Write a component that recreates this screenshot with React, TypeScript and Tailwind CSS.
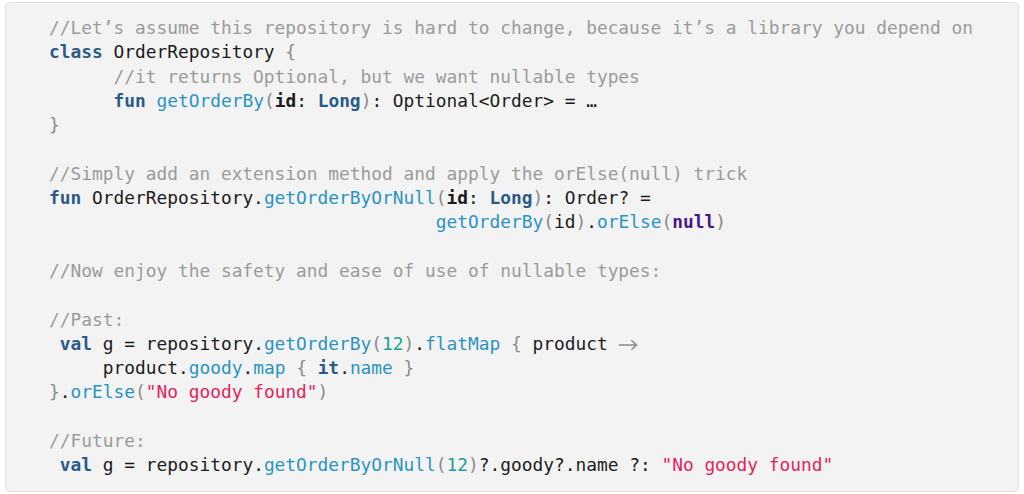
type Tok = [string, string];

const c = "text-[#9b9b9b]"; // comment
const k = "text-[#2c5a86] font-bold"; // keyword
const f = "text-[#2a93c2]"; // function / property
const p = "text-[#8a8a8a]"; // brackets
const t = "text-[#1c1c1c]"; // plain
const b = "text-[#1c1c1c] font-bold"; // param
const n = "text-[#1f9c9c]"; // number
const s = "text-[#e3245a]"; // string
const nl = "text-[#46178a] font-bold"; // null

const lines: Tok[][] = [
  [[c, "//Let\u2019s assume this repository is hard to change, because it\u2019s a library you depend on"]],
  [[k, "class"], [t, " OrderRepository "], [p, "{"]],
  [[c, "      //it returns Optional, but we want nullable types"]],
  [[t, "      "], [k, "fun"], [t, " "], [f, "getOrderBy"], [p, "("], [b, "id"], [t, ": "], [k, "Long"], [p, ")"], [t, ": Optional<Order> = \u2026"]],
  [[p, "}"]],
  [],
  [[c, "//Simply add an extension method and apply the orElse(null) trick"]],
  [[k, "fun"], [t, " OrderRepository."], [f, "getOrderByOrNull"], [p, "("], [b, "id"], [t, ": "], [k, "Long"], [p, ")"], [t, ": Order? ="]],
  [[t, "                                    "], [f, "getOrderBy"], [p, "("], [t, "id"], [p, ")"], [t, "."], [f, "orElse"], [p, "("], [nl, "null"], [p, ")"]],
  [],
  [[c, "//Now enjoy the safety and ease of use of nullable types:"]],
  [],
  [[c, "//Past:"]],
  [[t, " "], [k, "val"], [t, " g = repository."], [f, "getOrderBy"], [p, "("], [n, "12"], [p, ")"], [t, "."], [f, "flatMap"], [t, " "], [p, "{"], [t, " product "], ["arrow", "->"]],
  [[t, "     product."], [f, "goody"], [t, "."], [f, "map"], [t, " "], [p, "{"], [t, " "], [k, "it"], [t, "."], [f, "name"], [t, " "], [p, "}"]],
  [[p, "}"], [t, "."], [f, "orElse"], [p, "("], [s, "\"No goody found\""], [p, ")"]],
  [],
  [[c, "//Future:"]],
  [[t, " "], [k, "val"], [t, " g = repository."], [f, "getOrderByOrNull"], [p, "("], [n, "12"], [p, ")"], [t, "?.goody?.name ?: "], [s, "\"No goody found\""]],
];

function Arrow() {
  return (
    <span className="inline-block w-[2ch] align-middle text-[#8a8a8a]">
      <svg viewBox="0 0 22 12" className="h-[12px] w-[21px]" fill="none" stroke="currentColor" strokeWidth="1.6" strokeLinecap="round" strokeLinejoin="round">
        <path d="M1.5 6h18M14.5 1.5 19.5 6l-5 4.5" />
      </svg>
    </span>
  );
}

export default function App() {
  return (
    <div className="min-h-[494px] bg-white pl-[5px] pr-[5px] pt-[2px]">
      <div className="rounded-[5px] border border-[#dedede] bg-[#f3f3f3] pb-[13px] pl-[43px] pt-[13px]">
        <pre className="whitespace-pre text-[17.85px] leading-[24.3px] [font-family:'DejaVu_Sans_Mono',monospace]">
          {lines.map((line, i) => (
            <div key={i} className="h-[24.3px]">
              {line.map(([cls, text], j) =>
                cls === "arrow" ? (
                  <Arrow key={j} />
                ) : (
                  <span key={j} className={cls}>
                    {text}
                  </span>
                )
              )}
            </div>
          ))}
        </pre>
      </div>
    </div>
  );
}
